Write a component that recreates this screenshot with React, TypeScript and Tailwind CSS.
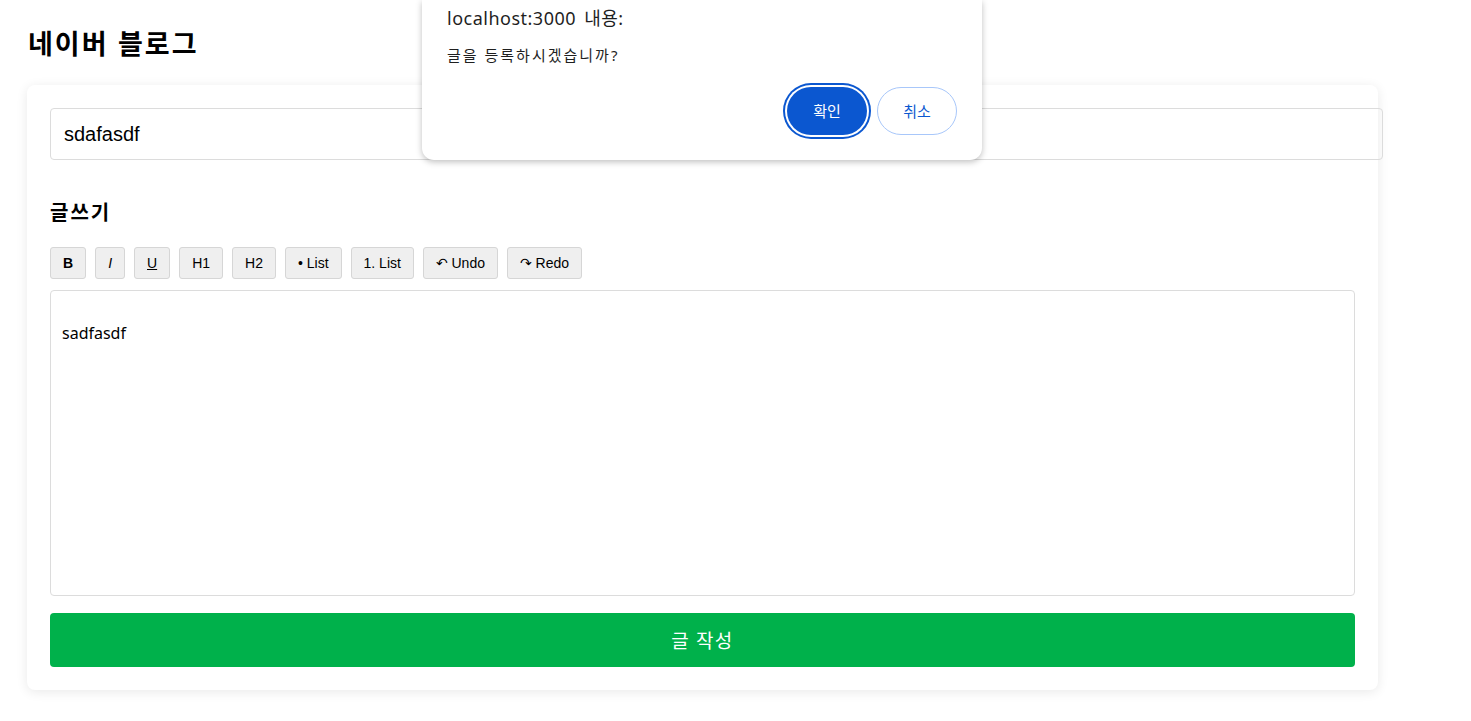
import React, { useState } from "react";

const tools = [
  { label: "B", cls: "font-bold" },
  { label: "I", cls: "italic" },
  { label: "U", cls: "underline" },
  { label: "H1", cls: "" },
  { label: "H2", cls: "" },
  { label: "• List", cls: "" },
  { label: "1. List", cls: "" },
  { label: "↶ Undo", cls: "" },
  { label: "↷ Redo", cls: "" },
];

const font = "font-['Liberation_Sans','Noto_Sans_CJK_KR',sans-serif]";

export default function App() {
  const [title, setTitle] = useState("sdafasdf");

  return (
    <div className={`relative min-h-[721px] bg-white text-black ${font}`}>
      <div className="pl-[27px] pt-[30px]">
        {/* Header */}
        <h1 className="ml-px text-[27px] font-bold leading-[30px] tracking-[2px]">
          네이버 블로그
        </h1>

        {/* Editor card */}
        <div className="mt-[25px] w-[1351px] rounded-lg bg-white p-[23px] shadow-[0_2px_12px_rgba(0,0,0,0.09)]">
          <input
            value={title}
            onChange={(e) => setTitle(e.target.value)}
            className="box-content block h-[50px] w-full rounded-[4px] border border-[#dcdcdc] px-[13px] text-[20px] text-black outline-none"
          />

          <h2 className="mt-[41px] text-[20px] font-bold leading-[24px] tracking-[2px]">글쓰기</h2>

          <div className="mt-[22px] flex gap-[9px]">
            {tools.map((t) => (
              <button
                key={t.label}
                className={`h-[32px] rounded-[3px] border border-[#d6d6d6] bg-[#efefef] px-[12px] text-[14px] text-black font-['Liberation_Sans','DejaVu_Sans',sans-serif] ${t.cls}`}
              >
                {t.label}
              </button>
            ))}
          </div>

          <div className="mt-[11px] h-[306px] rounded-[4px] border border-[#dcdcdc] p-[11px]">
            <p className="my-[19px] text-[16px] leading-[24px] font-['Noto_Sans','Noto_Sans_CJK_KR',sans-serif]">
              sadfasdf
            </p>
          </div>

          <button className="mt-[17px] flex h-[54px] w-full items-center justify-center rounded-[4px] bg-[#00b14b] text-[19px] tracking-[1.5px] text-white font-['Noto_Sans_CJK_KR',sans-serif]">
            글 작성
          </button>
        </div>
      </div>

      {/* Browser confirm dialog */}
      <div className="absolute left-[422px] top-0 w-[560px] rounded-b-[12px] bg-white px-[25px] pb-[25px] pt-[6px] shadow-[0_2px_6px_rgba(0,0,0,0.25)] font-['Noto_Sans','Noto_Sans_CJK_KR',sans-serif]">
        <div className="text-[18px] leading-[24px] tracking-[0.5px] text-[#1f1f1f] [word-spacing:3px]">localhost:3000 내용:</div>
        <div className="mt-[15px] text-[15px] leading-[20px] tracking-[2px] text-[#1f1f1f]">글을 등록하시겠습니까?</div>
        <div className="mt-[22px] flex justify-end gap-[10px]">
          <button className="h-[48px] w-[80px] rounded-full bg-[#0b57d0] text-[15px] text-white ring-2 ring-[#0b57d0] ring-offset-2 ring-offset-white">
            확인
          </button>
          <button className="h-[48px] w-[80px] rounded-full border border-[#a8c7fa] bg-white text-[15px] text-[#0b57d0]">
            취소
          </button>
        </div>
      </div>
    </div>
  );
}
